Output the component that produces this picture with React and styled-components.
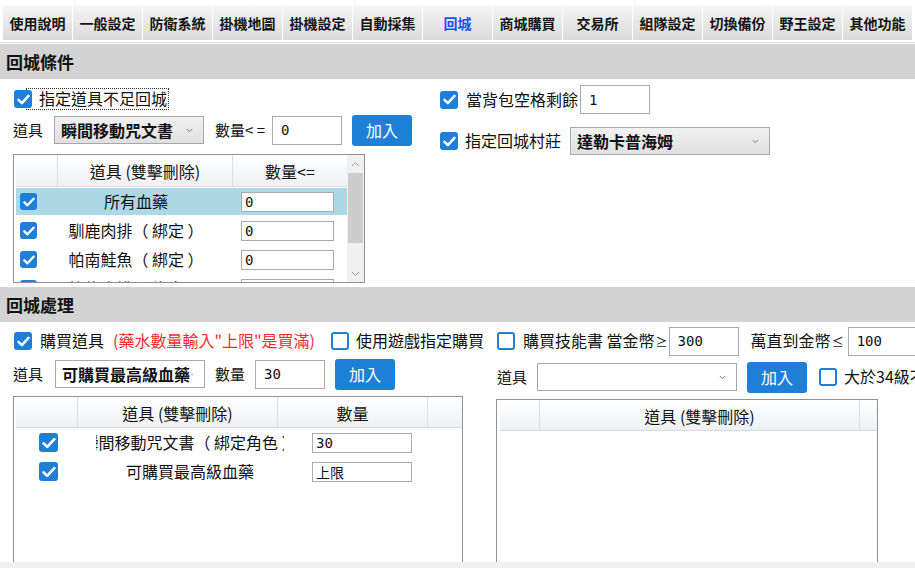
import React from 'react';
import styled, { createGlobalStyle } from 'styled-components';

const GlobalStyle = createGlobalStyle`
  html, body {
    margin: 0;
    padding: 0;
    background: #fff;
  }
  body {
    font-family: "Noto Sans CJK TC", "Noto Sans", sans-serif;
    color: #111;
    overflow: hidden;
  }
`;

const Page = styled.div`
  width: 915px;
  height: 568px;
  display: flex;
  flex-direction: column;
  overflow: hidden;
`;

const TabBar = styled.div`
  display: flex;
  gap: 1px;
  padding: 5px 0 0 3px;
`;

const TabItem = styled.div`
  flex: 0 0 69px;
  height: 35px;
  display: flex;
  align-items: center;
  justify-content: center;
  background: linear-gradient(#f6f6f6, #dadada);
  font-size: 14px;
  font-weight: 700;
  white-space: nowrap;
  color: ${p => (p.$active ? '#1f50ff' : '#141414')};
`;

const TabRule = styled.div`
  height: 1px;
  margin: 2px 0 1px;
  background: #dcdcdc;
`;

const SectionTitle = styled.div`
  height: 35px;
  flex: 0 0 35px;
  background: #d3d3d3;
  padding-left: 6px;
  display: flex;
  align-items: center;
  font-size: 17px;
  font-weight: 700;
`;

const Split = styled.div`
  display: grid;
  grid-template-columns: ${p => p.$left}px 1fr;
  padding-left: 13px;
  height: ${p => p.$h}px;
  flex: 0 0 ${p => p.$h}px;
  overflow: hidden;
`;

const Col = styled.div`
  display: flex;
  flex-direction: column;
  min-width: 0;
`;

const Row = styled.div`
  display: flex;
  align-items: center;
  height: ${p => p.$h}px;
  margin-top: ${p => p.$mt || 0}px;
  white-space: nowrap;
`;

const Label = styled.span`
  flex: 0 0 auto;
  font-size: ${p => p.$size || 16}px;
  line-height: 1.2;
  margin-left: ${p => p.$ml || 0}px;
  color: ${p => (p.$red ? '#f62b2b' : '#111')};
`;

const MathSign = styled.span`
  font-size: 12px;
  margin-left: 1px;
`;

const FocusLabel = styled.span`
  position: relative;
  z-index: 0;
  font-size: 16px;
  line-height: 1.2;
  margin-left: -5px;
  padding: 0 1px 1px 12px;
  outline: 1px dotted #333;
`;

const Box = styled.span`
  position: relative;
  z-index: 1;
  flex: 0 0 auto;
  box-sizing: border-box;
  width: ${p => p.$size}px;
  height: ${p => p.$size}px;
  margin-left: ${p => p.$ml || 0}px;
  border-radius: 3px;
  background: ${p => (p.$on ? '#1f7fd7' : '#fff')};
  border: ${p => (p.$on ? 'none' : '2px solid #1f7fd7')};
  display: inline-flex;
  align-items: center;
  justify-content: center;
`;

function Check({ on = true, size = 18, ml }) {
  return (
    <Box $on={on} $size={size} $ml={ml}>
      {on && (
        <svg width={size - 5} height={size - 7} viewBox="0 0 12 10">
          <path d="M1.4 5.3 4.5 8.3 10.6 1.7" fill="none" stroke="#fff" strokeWidth="2.3" strokeLinecap="round" strokeLinejoin="round" />
        </svg>
      )}
    </Box>
  );
}

const TextBox = styled.input`
  flex: 0 0 auto;
  box-sizing: border-box;
  width: ${p => p.$w}px;
  height: ${p => p.$h || 29}px;
  margin-left: ${p => p.$ml || 0}px;
  border: 1px solid #ababab;
  background: #fff;
  padding: 0 0 0 ${p => p.$pad || 8}px;
  font-family: "DejaVu Sans Mono", "Noto Sans CJK TC", monospace;
  font-size: ${p => p.$fs || 14}px;
  color: #111;
  outline: none;
`;

const SelectBox = styled.div`
  flex: 0 0 auto;
  box-sizing: border-box;
  width: ${p => p.$w}px;
  height: 28px;
  margin-left: ${p => p.$ml || 0}px;
  border: 1px solid #a8a8a8;
  background: ${p => (p.$plain ? '#fff' : 'linear-gradient(#f1f1f1, #e0e0e0)')};
  display: flex;
  align-items: center;
  justify-content: space-between;
  padding: 0 10px 0 6px;
  font-size: 16px;
  font-weight: 700;
  overflow: hidden;
`;

function Select({ w, ml, plain, children }) {
  return (
    <SelectBox $w={w} $ml={ml} $plain={plain}>
      <span>{children}</span>
      <svg width="7" height="5" viewBox="0 0 7 5">
        <path d="M0.8 1 3.5 3.8 6.2 1" fill="none" stroke="#777" strokeWidth="1" />
      </svg>
    </SelectBox>
  );
}

const AddButton = styled.button`
  flex: 0 0 auto;
  width: 60px;
  height: 31px;
  margin-left: ${p => p.$ml || 0}px;
  border: none;
  border-radius: 3px;
  background: #1e7fd6;
  color: #fff;
  font-family: inherit;
  font-size: 16px;
  padding: 0;
`;

const Table = styled.div`
  box-sizing: border-box;
  width: ${p => p.$w}px;
  height: ${p => p.$h}px;
  flex: 0 0 auto;
  margin-top: ${p => p.$mt || 0}px;
  border: 1px solid #909096;
  background: #fff;
  display: flex;
  overflow: hidden;
`;

const TableInner = styled.div`
  flex: 1;
  min-width: 0;
  overflow: hidden;
  padding: ${p => p.$pt || 0}px 0 0 ${p => p.$pl}px;
`;

const HeadRow = styled.div`
  box-sizing: border-box;
  display: grid;
  grid-template-columns: ${p => p.$cols};
  height: ${p => p.$h}px;
  background: linear-gradient(#ffffff, #eef0f3);
  border-bottom: 1px solid #dadada;
`;

const HeadCell = styled.div`
  border-right: 1px solid #dedede;
  display: flex;
  align-items: center;
  justify-content: center;
  font-size: 16px;
  white-space: nowrap;
  overflow: hidden;
  &:last-child {
    border-right: none;
  }
`;

const DataRow = styled.div`
  display: grid;
  grid-template-columns: ${p => p.$cols};
  align-items: center;
  height: 27px;
  margin-top: ${p => (p.$first ? 1 : 2)}px;
  background: ${p => (p.$sel ? '#add8e6' : 'transparent')};
`;

const CheckCell = styled.div`
  display: flex;
  align-items: center;
  padding-left: ${p => p.$pl}px;
`;

const ItemCell = styled.div`
  display: flex;
  justify-content: center;
  overflow: hidden;
  white-space: nowrap;
  font-size: 16px;
  line-height: 27px;
  height: 27px;
`;

const QtyCell = styled.div`
  display: flex;
  align-items: center;
  padding-left: ${p => p.$pl}px;
`;

const ScrollTrack = styled.div`
  flex: 0 0 17px;
  background: #f0f0f0;
  display: flex;
  flex-direction: column;
  align-items: center;
`;

const ScrollArrow = styled.div`
  height: 17px;
  display: flex;
  align-items: center;
  justify-content: center;
`;

const ScrollThumb = styled.div`
  width: 15px;
  height: 70px;
  margin-top: 1px;
  background: #cdcdcd;
`;

const ScrollSpace = styled.div`
  flex: 1;
`;

const BottomStrip = styled.div`
  flex: 1;
  background: #f0f0f0;
`;

const Arrow = ({ up }) => (
  <svg width="9" height="6" viewBox="0 0 9 6">
    <path d={up ? 'M1 5 4.5 1.5 8 5' : 'M1 1 4.5 4.5 8 1'} fill="none" stroke="#a3a3a3" strokeWidth="1" />
  </svg>
);

const tabs = ['使用說明', '一般設定', '防衛系統', '掛機地圖', '掛機設定', '自動採集', '回城', '商城購買', '交易所', '組隊設定', '切換備份', '野王設定', '其他功能'];

const returnItems = [
  { name: '所有血藥', qty: '0', sel: true },
  { name: '馴鹿肉排（ 綁定 ）', qty: '0' },
  { name: '帕南鮭魚（ 綁定 ）', qty: '0' },
  { name: '烤熊肉排（ 綁定 ）', qty: '0' },
];

const buyItems = [
  { name: '瞬間移動咒文書（ 綁定角色 ）', qty: '30' },
  { name: '可購買最高級血藥', qty: '上限' },
];

export default function App() {
  return (
    <Page>
      <GlobalStyle />
      <TabBar>
        {tabs.map(t => (
          <TabItem key={t} $active={t === '回城'}>{t}</TabItem>
        ))}
      </TabBar>
      <TabRule />

      <SectionTitle>回城條件</SectionTitle>
      <Split $left={427} $h={208}>
        <Col>
          <Row $h={24} $mt={8}>
            <Check ml={1} />
            <FocusLabel>指定道具不足回城</FocusLabel>
          </Row>
          <Row $h={32} $mt={3}>
            <Label $size={15}>道具</Label>
            <Select w={150} ml={11}>瞬間移動咒文書</Select>
            <Label $size={15} $ml={11}>數量&lt; =</Label>
            <TextBox $w={70} $ml={7} defaultValue="0" readOnly />
            <AddButton $ml={10}>加入</AddButton>
          </Row>
          <Table $w={352} $h={129} $mt={8}>
            <TableInner $pl={2}>
              <HeadRow $cols="42px 175px 1fr" $h={32}>
                <HeadCell />
                <HeadCell>道具 (雙擊刪除)</HeadCell>
                <HeadCell>數量&lt;=</HeadCell>
              </HeadRow>
              {returnItems.map((it, i) => (
                <DataRow key={it.name} $cols="24px 192px 1fr" $sel={it.sel} $first={i === 0}>
                  <CheckCell $pl={4}><Check size={17} /></CheckCell>
                  <ItemCell>{it.name}</ItemCell>
                  <QtyCell $pl={9}><TextBox $w={93} $h={20} $pad={3} defaultValue={it.qty} readOnly /></QtyCell>
                </DataRow>
              ))}
            </TableInner>
            <ScrollTrack>
              <ScrollArrow><Arrow up /></ScrollArrow>
              <ScrollThumb />
              <ScrollSpace />
              <ScrollArrow><Arrow /></ScrollArrow>
            </ScrollTrack>
          </Table>
        </Col>
        <Col>
          <Row $h={29} $mt={6}>
            <Check />
            <Label $ml={8}>當背包空格剩餘</Label>
            <TextBox $w={70} $ml={2} defaultValue="1" readOnly />
          </Row>
          <Row $h={28} $mt={13}>
            <Check />
            <Label $ml={7}>指定回城村莊</Label>
            <Select w={200} ml={9}>達勒卡普海姆</Select>
          </Row>
        </Col>
      </Split>

      <SectionTitle>回城處理</SectionTitle>
      <Split $left={483} $h={240}>
        <Col>
          <Row $h={30} $mt={4}>
            <Check ml={1} />
            <Label $ml={8}>購買道具</Label>
            <Label $ml={9} $red>(藥水數量輸入"上限"是買滿)</Label>
            <Check on={false} ml={16} />
            <Label $ml={7}>使用遊戲指定購買</Label>
          </Row>
          <Row $h={32} $mt={2}>
            <Label $size={15}>道具</Label>
            <Select w={150} ml={12} plain>可購買最高級血藥</Select>
            <Label $size={15} $ml={10}>數量</Label>
            <TextBox $w={70} $ml={10} defaultValue="30" readOnly />
            <AddButton $ml={10}>加入</AddButton>
          </Row>
          <Table $w={450} $h={200} $mt={6}>
            <TableInner $pl={2} $pt={1}>
              <HeadRow $cols="62px 200px 150px 32px" $h={30}>
                <HeadCell />
                <HeadCell>道具 (雙擊刪除)</HeadCell>
                <HeadCell>數量</HeadCell>
                <HeadCell />
              </HeadRow>
              {buyItems.map((it, i) => (
                <DataRow key={it.name} $cols="80px 188px 1fr" $first={i === 0}>
                  <CheckCell $pl={23}><Check size={19} /></CheckCell>
                  <ItemCell>{it.name}</ItemCell>
                  <QtyCell $pl={28}><TextBox $w={100} $h={20} $pad={3} defaultValue={it.qty} readOnly /></QtyCell>
                </DataRow>
              ))}
            </TableInner>
          </Table>
        </Col>
        <Col>
          <Row $h={30} $mt={4}>
            <Check on={false} ml={1} />
            <Label $ml={8}>購買技能書 當金幣<MathSign>≥</MathSign></Label>
            <TextBox $w={70} $ml={1} defaultValue="300" readOnly />
            <Label $ml={12}>萬直到金幣<MathSign>≤</MathSign></Label>
            <TextBox $w={70} $ml={4} defaultValue="100" readOnly />
          </Row>
          <Row $h={32} $mt={5}>
            <Label $size={15} $ml={1}>道具</Label>
            <Select w={200} ml={10} plain />
            <AddButton $ml={10}>加入</AddButton>
            <Check on={false} ml={12} />
            <Label $ml={7}>大於34級不購買</Label>
          </Row>
          <Table $w={382} $h={200} $mt={6}>
            <TableInner $pl={3} $pt={1}>
              <HeadRow $cols="40px 320px 14px" $h={30}>
                <HeadCell />
                <HeadCell>道具 (雙擊刪除)</HeadCell>
                <HeadCell />
              </HeadRow>
            </TableInner>
          </Table>
        </Col>
      </Split>
      <BottomStrip />
    </Page>
  );
}
